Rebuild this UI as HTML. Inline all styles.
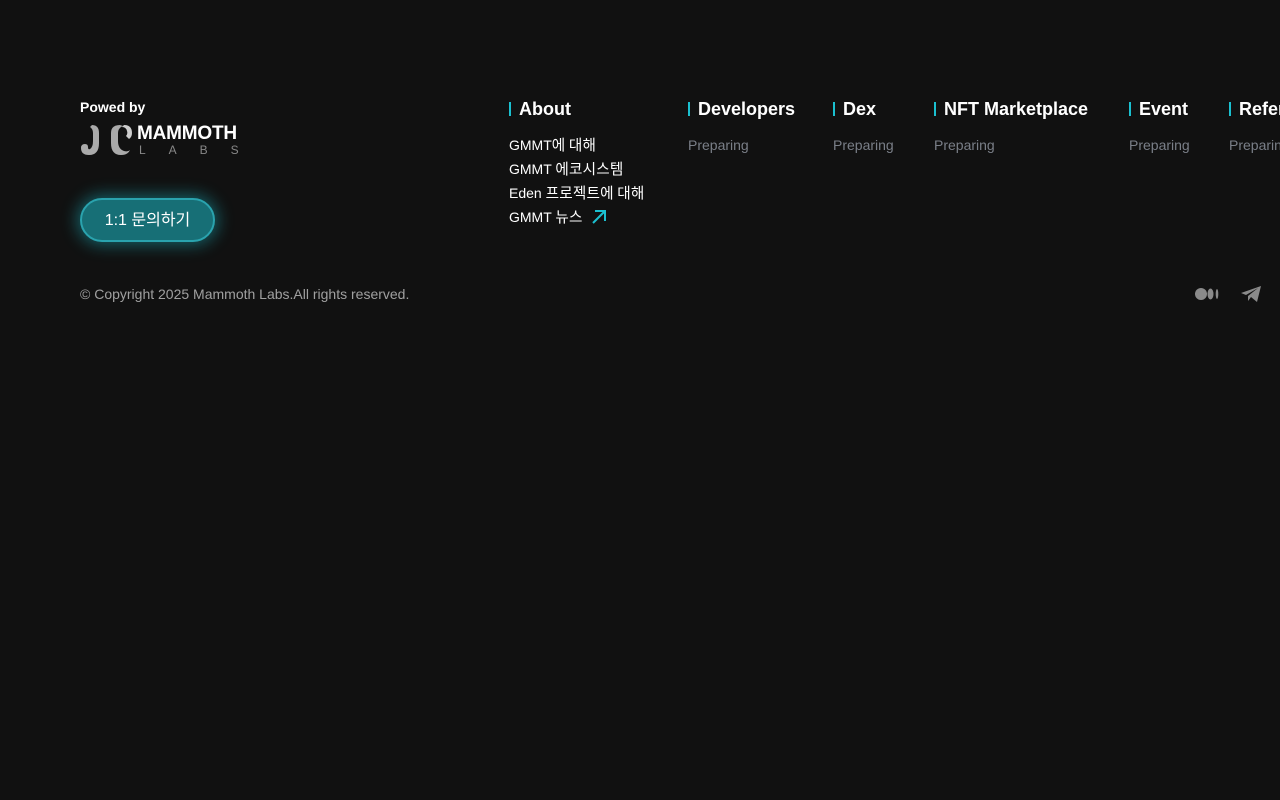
<!DOCTYPE html>
<html><head><meta charset="utf-8"><style>
body{margin:0;width:1280px;height:800px;background:#111111;overflow:hidden;font-family:"Liberation Sans","Noto Sans CJK KR",sans-serif;position:relative}
.a{position:absolute;white-space:nowrap}
.h{font-weight:bold;font-size:18px;color:#fff;border-left:2px solid #1bc0d0;padding-left:8px;line-height:14px;top:102px}
.l{font-size:14px;color:#fff;line-height:16px}
.k{font-family:"Noto Sans CJK KR",sans-serif;font-size:14.6px;letter-spacing:0.2px}
.p{font-size:14px;color:#7a7f88;top:137px}
</style></head><body>
<div class="a" style="left:80px;top:99px;font-size:14px;font-weight:bold;color:#fff">Powed by</div>
<svg class="a" style="left:80px;top:123px" width="60" height="36" viewBox="0 0 60 36">
<path d="M12 2 q7 0 7 8 v10 q0 12 -10 12 q-8 0 -8 -7 q0 -4 4 -4 q3 0 3 3 q0 3 2 2 q3 -2 3 -8 v-8 q0 -4 -3 -6z" fill="#aaa"/>
<path d="M40 2 q-9 0 -9 8 v10 q0 12 10 12 q7 0 9 -5 q-2 2 -6 1 q-6 -2 -6 -10 v-8 q0 -5 5 -7z" fill="#aaa"/>
<path d="M44 2 q8 0 8 8 q0 4 -3 6 l-3 -3 q2 -2 1 -5 q-1 -4 -5 -4z" fill="#ccc"/>
</svg>
<div class="a" style="left:137px;top:123px;font-size:19px;font-weight:900;color:#fff;letter-spacing:-0.2px">MAMMOTH</div>
<div class="a" style="left:139px;top:143px;font-size:12px;color:#888;letter-spacing:23px">LABS</div>
<div class="a" style="left:80px;top:198px;width:131px;height:40px;border:2px solid #2aa3ae;border-radius:22px;background:#176f76;box-shadow:0 0 16px 3px rgba(27,190,205,.45);color:#fff;font-size:16px;line-height:42px;text-align:center">1:1 <span style="font-family:'Noto Sans CJK KR',sans-serif;font-size:16px;line-height:16px">문의하기</span></div>
<div class="a h" style="left:509px">About</div>
<div class="a l" style="left:509px;top:137px">GMMT<span class="k">에 대해</span></div>
<div class="a l" style="left:509px;top:161px">GMMT <span class="k">에코시스템</span></div>
<div class="a l" style="left:509px;top:185px">Eden <span class="k">프로젝트에 대해</span></div>
<div class="a l" style="left:509px;top:209px">GMMT <span class="k">뉴스</span></div>
<svg class="a" style="left:591px;top:209px" width="16" height="16" viewBox="0 0 16 16"><path d="M2 14 L14 2 M4 2 H14 V12" stroke="#1bc0d0" stroke-width="2" fill="none"/></svg>
<div class="a h" style="left:688px">Developers</div><div class="a p" style="left:688px">Preparing</div>
<div class="a h" style="left:833px">Dex</div><div class="a p" style="left:833px">Preparing</div>
<div class="a h" style="left:934px">NFT Marketplace</div><div class="a p" style="left:934px">Preparing</div>
<div class="a h" style="left:1129px">Event</div><div class="a p" style="left:1129px">Preparing</div>
<div class="a h" style="left:1229px">Reference</div><div class="a p" style="left:1229px">Preparing</div>
<div class="a" style="left:80px;top:286px;font-size:14px;color:#a0a0a0">© Copyright 2025 Mammoth Labs.All rights reserved.</div>
<svg class="a" style="left:1194px;top:286px" width="26" height="16" viewBox="0 0 26 16"><circle cx="7" cy="8" r="6" fill="#8a8a8a"/><ellipse cx="16.5" cy="8" rx="3" ry="5.5" fill="#8a8a8a"/><ellipse cx="23" cy="8" rx="1.3" ry="5" fill="#8a8a8a"/></svg>
<svg class="a" style="left:1240px;top:284px" width="22" height="20" viewBox="0 0 22 20"><path d="M1 9 L21 2 L17 18 L11 13 L8 17 L8 12 L18 4 L6 11 Z" fill="#8a8a8a"/></svg>
</body></html>
